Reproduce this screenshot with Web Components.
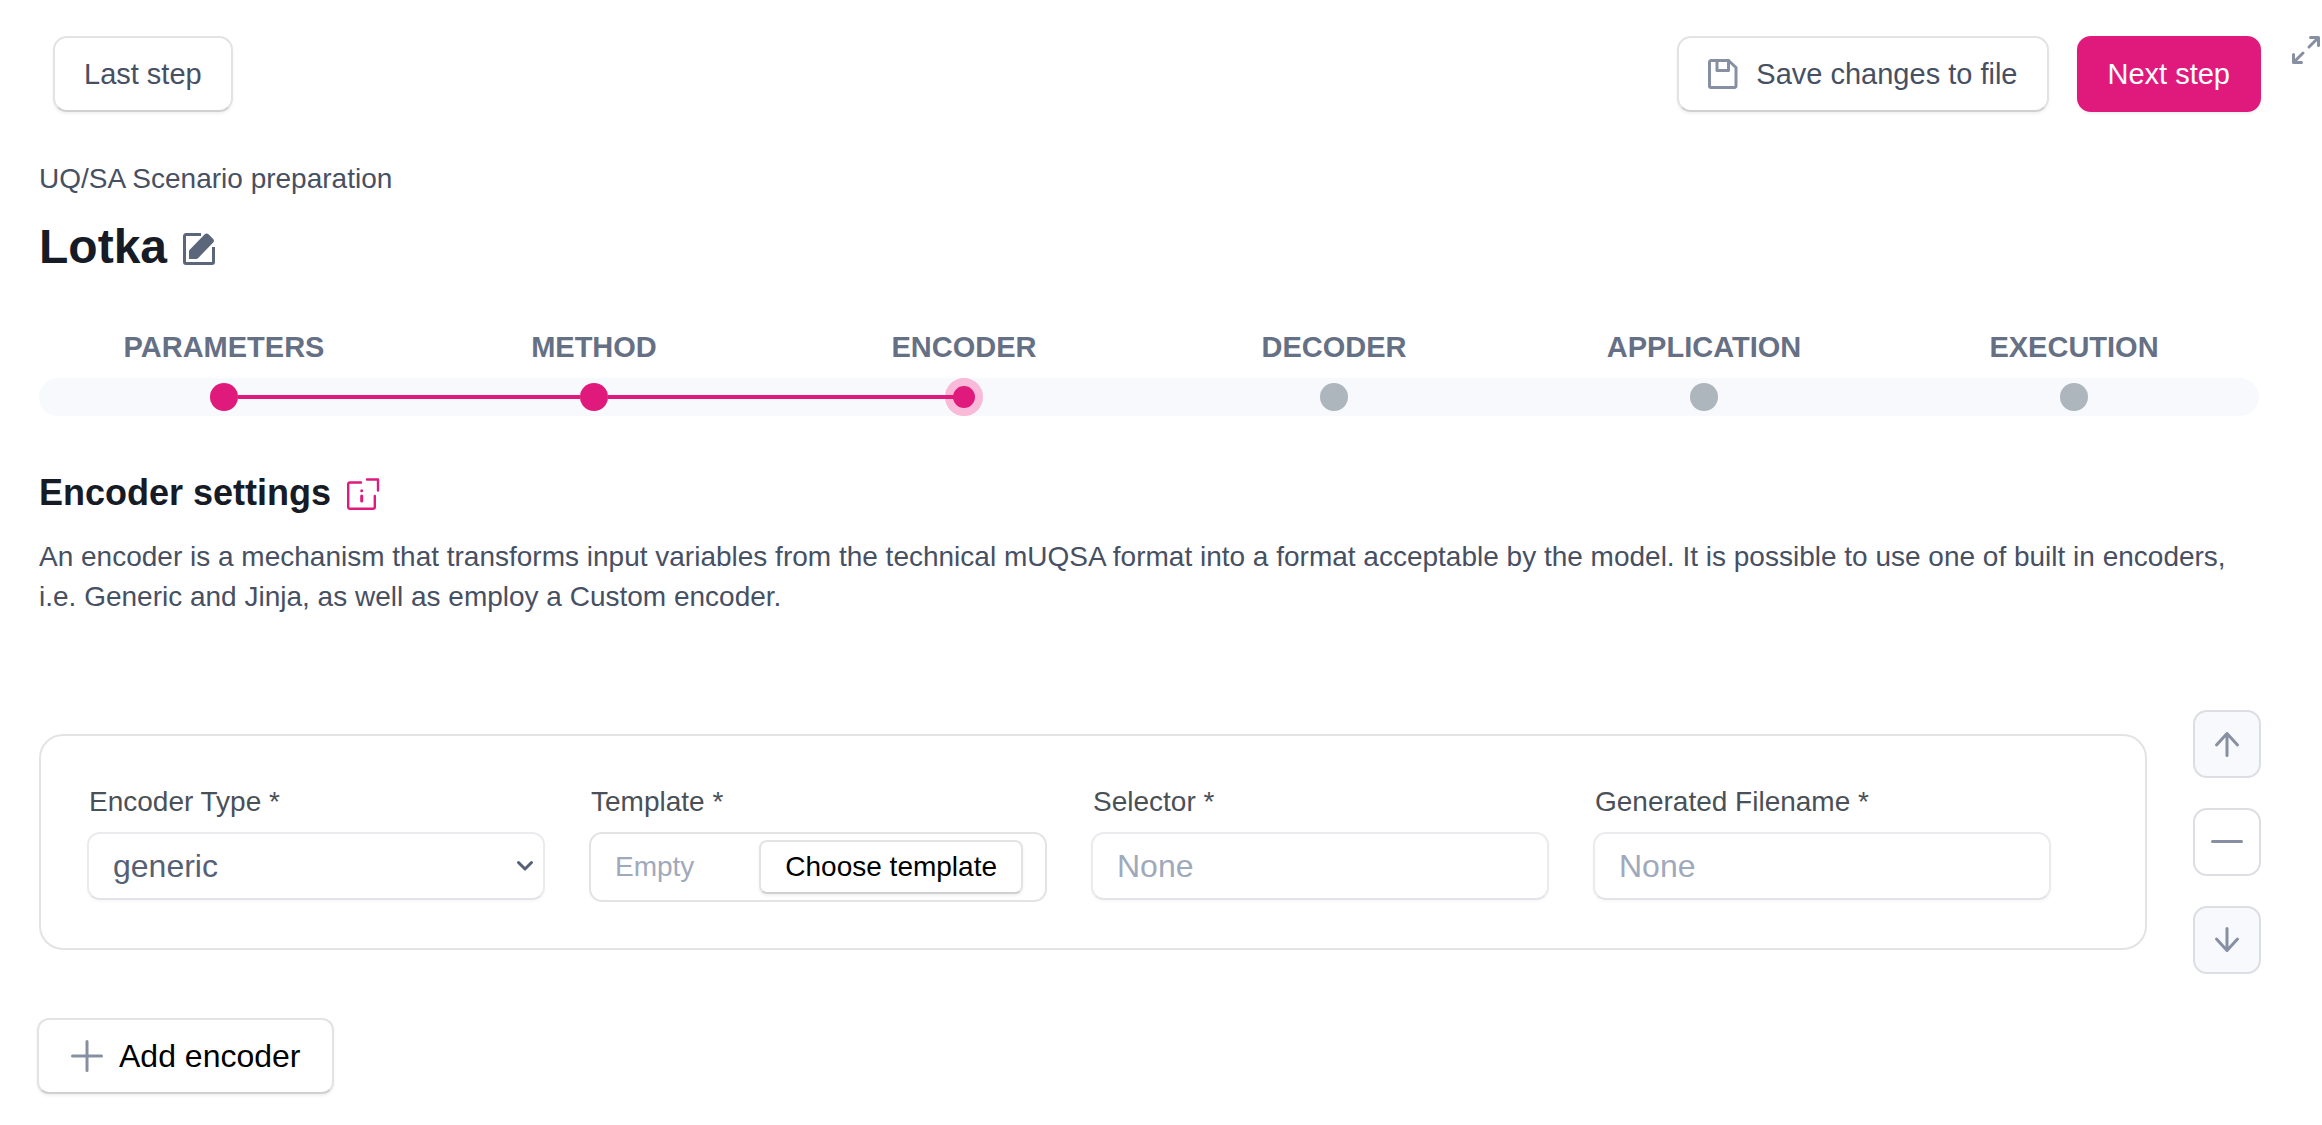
<!DOCTYPE html>
<html lang="en">
<head>
<meta charset="utf-8">
<title>UQ/SA Scenario preparation</title>
<style>
  html { background: #fff; }
  body {
    margin: 0;
    font-family: "Liberation Sans", Arial, sans-serif;
    font-size: 28px;
    line-height: 40px;
    color: #475063;
    --accent: #e01a7c;
    --heading: #161b26;
    --muted: #667085;
    --icon: #8790a2;
    --line: #e3e3e4;
    --line-dark: #d0d0d1;
    --soft: #f8f9fd;
    --placeholder: #a0a9bb;
  }
</style>
</head>
<body>
<scenario-page></scenario-page>

<script>
const icons = {
  save: ['0 0 30 30', 3, '<path d="M20.500 1.500H3A1.500 1.500 0 0 0 1.500 3V27A1.500 1.500 0 0 0 3 28.500H26.500A1.500 1.500 0 0 0 28 27V8.500Z"/><path d="M9 1.500V11.500H20.500V1.500"/>'],
  expand: ['0 0 28 28', 3, '<path d="M17 11 26 2M18.500 1.500H26.500V9.500M11 17 2 26M1.500 18.500V26.500H9.500"/>'],
  edit: ['0 0 32 32', 3, '<path stroke-linecap="butt" d="M18 1.500H3A1.500 1.500 0 0 0 1.500 3V29A1.500 1.500 0 0 0 3 30.500H29A1.500 1.500 0 0 0 30.500 29V14"/><path fill="currentColor" stroke="none" d="M6 26V18.500Q6 17.500 6.700 16.800L21.500 1.500Q23.500-.500 25.500 1.200L30 5.700Q31.800 7.500 30.200 9.500L15 25.200Q14.200 26 13.200 26Z"/>'],
  info: ['0 0 32 32', 2.4, '<path d="M14 4.500H3A1.800 1.800 0 0 0 1.200 6.300V29A1.800 1.800 0 0 0 3 30.800H26A1.800 1.800 0 0 0 27.800 29V18M20 1.500H31V12.500"/><path stroke-width="3" d="M14.700 12.700V12.800M14.700 18V23"/>'],
  up: ['0 0 32 32', 3, '<path d="M16 5.500V27.500M5.500 17 16 5.500 26.500 17"/>'],
  down: ['0 0 32 32', 3, '<path d="M16 4.500V26.500M5.500 15 16 26.500 26.500 15"/>'],
  minus: ['0 0 32 32', 3, '<path d="M1.500 15.500H30.500"/>'],
  plus: ['0 0 32 32', 3, '<path d="M1.500 16H30.500M16 1.500V30.500"/>'],
  chevron: ['0 0 16 10', 3, '<path d="M1.500 1.500 8 8 14.500 1.500"/>']
};

function define(name, html, setup) {
  customElements.define(name, class extends HTMLElement {
    constructor() {
      super();
      this.attachShadow({ mode: 'open' }).innerHTML = html;
    }
    connectedCallback() {
      if (setup) setup.call(this, this.shadowRoot);
    }
  });
}

const reset = '*{box-sizing:border-box}button,input,select{font:inherit;color:inherit;margin:0}';

define('ui-icon', `
  <style>
    :host { display: block; flex: none; width: 32px; height: 32px; }
    svg { display: block; width: 100%; height: 100%; overflow: visible; }
  </style>`,
  function (root) {
    const [box, width, shapes] = icons[this.getAttribute('name')];
    root.innerHTML += `<svg viewBox="${box}" fill="none" stroke="currentColor" stroke-width="${width}" stroke-linecap="round" stroke-linejoin="round" aria-hidden="true">${shapes}</svg>`;
  });

define('ui-button', `
  <style>${reset}
    :host { display: block; font-size: 29px; }
    :host([size="large"]) { font-size: 32px; color: #000; }
    :host([size="small"]) { font-size: 28px; color: #000; }
    button {
      display: flex; align-items: center; gap: 18px; height: 76px; padding: 0 29px;
      border: 2px solid var(--line); border-bottom-color: var(--line-dark);
      border-radius: 14px; background: #fff; white-space: nowrap;
      box-shadow: 0 2px 3px rgba(0,0,0,.06);
    }
    :host([variant="primary"]) button { background: var(--accent); border-color: var(--accent); color: #fff; }
    :host([size="large"]) button { padding: 0 32px; gap: 16px; border-radius: 12px; }
    :host([size="small"]) button { height: 54px; padding: 0 24px; border-radius: 8px; }
    ::slotted(ui-icon) { color: var(--icon); }
  </style>
  <button type="button"><slot name="icon"></slot><slot></slot></button>`);

define('icon-button', `
  <style>${reset}
    :host { display: block; }
    button { display: block; padding: 0; border: 0; background: none; }
    :host([boxed]) button {
      display: grid; place-items: center; width: 68px; height: 68px; color: var(--icon);
      border: 2px solid #dddee3; border-radius: 14px; background: #fff;
    }
    :host([boxed="soft"]) button { background: var(--soft); }
  </style>
  <button type="button"><slot></slot></button>`,
  function (root) {
    root.querySelector('button').setAttribute('aria-label', this.getAttribute('label'));
  });

define('top-bar', `
  <style>${reset}
    :host { display: flex; align-items: flex-start; gap: 28px; padding: 36px 2px 0 53px; }
    .space { flex: 1; }
    .save { width: 30px; height: 30px; }
    .expand { width: 28px; height: 28px; color: var(--icon); }
    icon-button { padding-left: 3px; }
  </style>
  <ui-button>Last step</ui-button>
  <div class="space"></div>
  <ui-button><ui-icon class="save" slot="icon" name="save"></ui-icon>Save changes to file</ui-button>
  <ui-button variant="primary">Next step</ui-button>
  <icon-button label="Expand"><ui-icon class="expand" name="expand"></ui-icon></icon-button>`);

define('page-title', `
  <style>${reset}
    :host { display: block; }
    p, h1 { margin: 0; }
    .row { display: flex; align-items: center; gap: 16px; margin-top: 20px; }
    h1 { font-size: 48px; line-height: 56px; color: var(--heading); }
    icon-button { color: #5b667a; padding-top: 4px; }
  </style>
  <p>UQ/SA Scenario preparation</p>
  <div class="row"><h1><slot></slot></h1>
    <icon-button label="Rename"><ui-icon name="edit"></ui-icon></icon-button></div>`);

define('step-item', `
  <style>${reset}
    :host { flex: 1; display: block; text-align: center; font-size: 29px; font-weight: bold; color: var(--muted); }
    .track { display: grid; grid-template-columns: 1fr auto 1fr; align-items: center; height: 38px; margin-top: 11px; background: var(--soft); }
    .track i { height: 4px; }
    .dot { width: 28px; height: 28px; border-radius: 50%; background: #adb5bd; }
    :host([state]) .dot, :host([state]) .track i { background: var(--accent); }
    :host([first]) .track { border-radius: 19px 0 0 19px; }
    :host([last]) .track { border-radius: 0 19px 19px 0; }
    :host([first]) .track i:first-child, :host([state="current"]) .track i:last-child { background: none; }
    :host([state="current"]) .dot { width: 38px; height: 38px; border: 8px solid #f9bada; }
    :host([state="current"]) .track i:first-child { z-index: 1; margin-right: -10px; }
  </style>
  <slot></slot>
  <div class="track"><i></i><span class="dot"></span><i></i></div>`);

define('step-progress', `
  <style>:host { display: flex; }</style><slot></slot>`);

define('settings-intro', `
  <style>${reset}
    :host { display: block; }
    .row { display: flex; align-items: center; gap: 16px; }
    h2 { margin: 0; font-size: 36px; line-height: 40px; color: var(--heading); }
    a { color: var(--accent); padding-top: 2px; }
    p { margin: 24px 0 0; }
  </style>
  <div class="row"><h2><slot name="heading"></slot></h2>
    <a href="#encoder-help" aria-label="About encoders"><ui-icon name="info"></ui-icon></a></div>
  <p><slot></slot></p>`);

const fieldStyle = `${reset}
  :host { display: block; flex: 1; min-width: 0; }
  label { display: block; margin-bottom: 10px; padding-left: 2px; color: #4a5058; }
  input, select {
    display: block; width: 100%; height: 68px; padding: 0 24px; font-size: 32px; outline: 0;
    border: 2px solid #ebebef; border-bottom-color: #e2e2e8; border-radius: 13px;
    background: #fff; box-shadow: 0 2px 3px rgba(0,0,0,.03);
  }
  ::placeholder { color: var(--placeholder); opacity: 1; }`;

define('text-field', `
  <style>${fieldStyle}</style>
  <label for="control"><slot></slot></label>
  <input id="control" type="text" placeholder="None">`);

define('select-field', `
  <style>${fieldStyle}
    .box { display: grid; align-items: center; color: #566075; }
    .box > * { grid-area: 1 / 1; }
    select { appearance: none; }
    ui-icon { width: 16px; height: 10px; justify-self: end; margin-right: 12px; pointer-events: none; }
  </style>
  <label for="control"><slot></slot></label>
  <div class="box">
    <select id="control"><option>generic</option><option>jinja</option><option>custom</option></select>
    <ui-icon name="chevron"></ui-icon>
  </div>`);

define('template-field', `
  <style>${fieldStyle}
    .box { display: flex; align-items: center; height: 70px; padding: 0 22px 0 24px; border: 2px solid var(--line); border-radius: 13px; }
    input { flex: 1; min-width: 0; height: 54px; padding: 0; border: 0; font-size: 28px; box-shadow: none; }
  </style>
  <label for="control"><slot></slot></label>
  <div class="box">
    <input id="control" type="text" placeholder="Empty" readonly>
    <ui-button size="small">Choose template</ui-button>
  </div>`);

define('encoder-row', `
  <style>${reset}
    :host { display: flex; align-items: center; gap: 46px; }
    .card { flex: 1; display: flex; align-items: flex-start; gap: 44px; padding: 46px 94px 46px 46px; border: 2px solid var(--line); border-radius: 24px; }
    .actions { display: flex; flex-direction: column; gap: 30px; }
  </style>
  <form class="card">
    <select-field>Encoder Type *</select-field>
    <template-field>Template *</template-field>
    <text-field>Selector *</text-field>
    <text-field>Generated Filename *</text-field>
  </form>
  <div class="actions">
    <icon-button boxed="soft" label="Move up"><ui-icon name="up"></ui-icon></icon-button>
    <icon-button boxed label="Remove"><ui-icon name="minus"></ui-icon></icon-button>
    <icon-button boxed="soft" label="Move down"><ui-icon name="down"></ui-icon></icon-button>
  </div>`);

define('scenario-page', `
  <style>${reset}
    :host { display: block; }
    main { display: flex; flex-direction: column; padding: 47px 61px 0 39px; }
    step-progress { margin: 52px 2px 0 0; }
    settings-intro { margin-top: 57px; }
    encoder-row { margin-top: 93px; }
    footer { display: flex; padding: 44px 37px 30px; }
  </style>
  <top-bar></top-bar>
  <main>
    <page-title>Lotka</page-title>
    <step-progress>
      <step-item first state="done">PARAMETERS</step-item>
      <step-item state="done">METHOD</step-item>
      <step-item state="current">ENCODER</step-item>
      <step-item>DECODER</step-item>
      <step-item>APPLICATION</step-item>
      <step-item last>EXECUTION</step-item>
    </step-progress>
    <settings-intro><span slot="heading">Encoder settings</span>An encoder is a mechanism that transforms input variables from the technical mUQSA format into a format acceptable by the model. It is possible to use one of built in encoders, i.e. Generic and Jinja, as well as employ a Custom encoder.</settings-intro>
    <encoder-row></encoder-row>
  </main>
  <footer><ui-button size="large"><ui-icon slot="icon" name="plus"></ui-icon>Add encoder</ui-button></footer>`);
</script>
</body>
</html>
